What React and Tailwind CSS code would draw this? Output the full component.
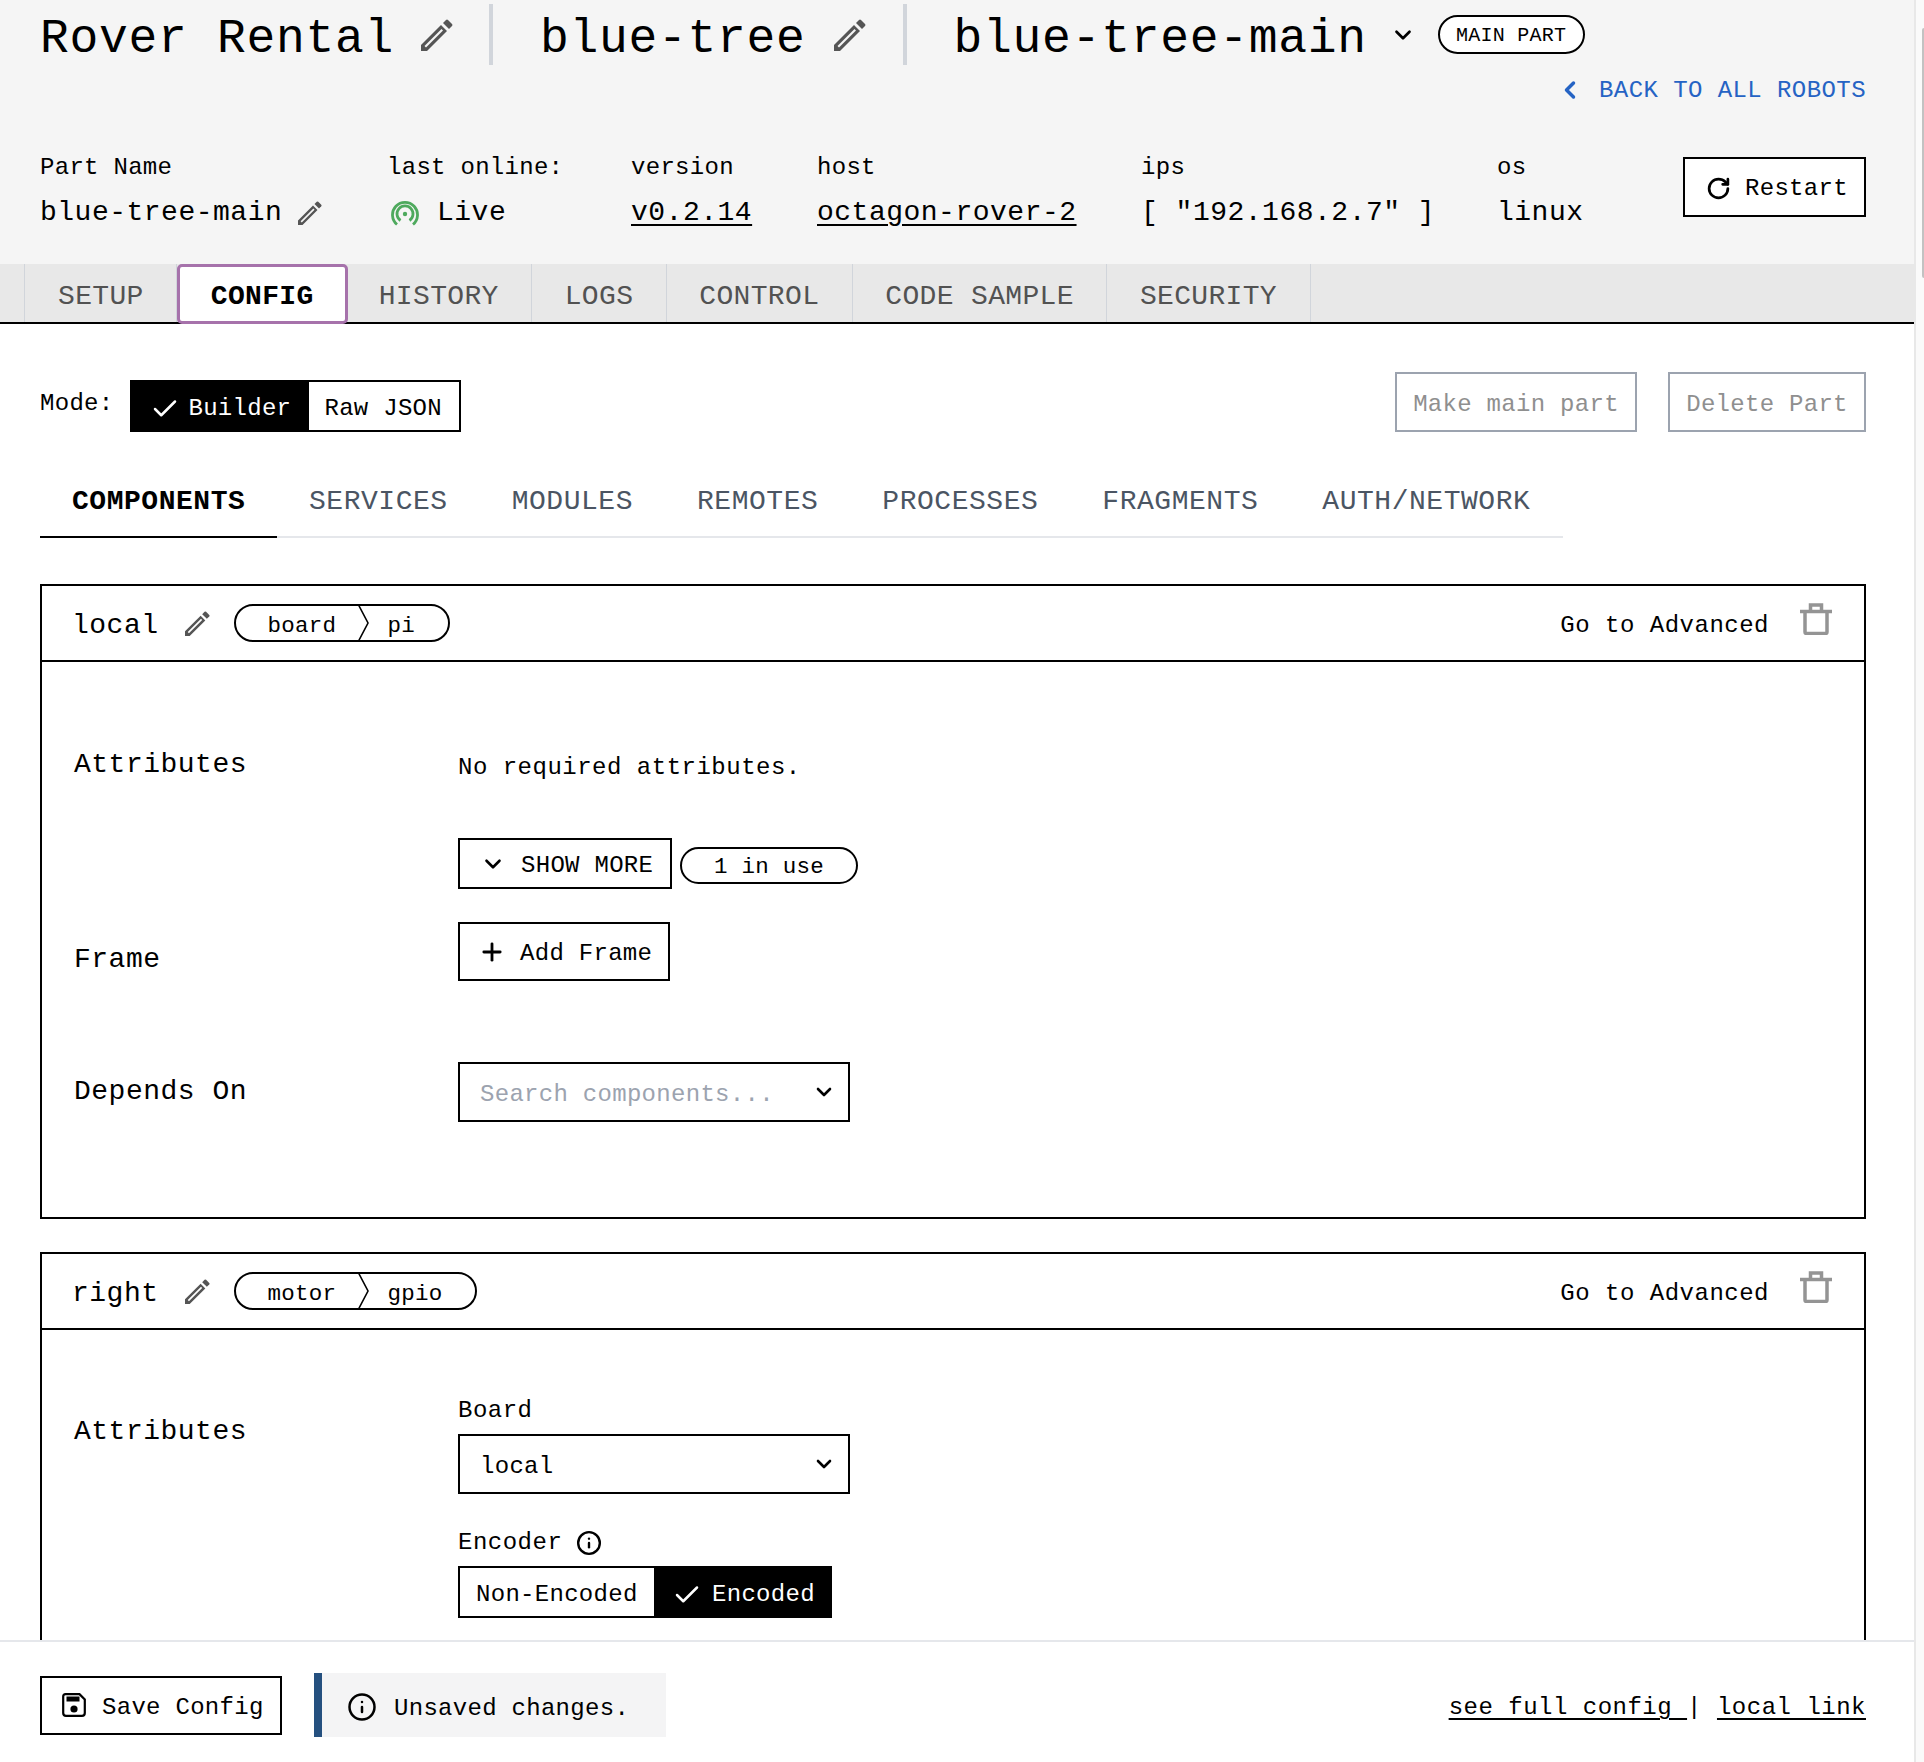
import { Check, ChevronDown, ChevronLeft, Info, Plus, RotateCw } from "lucide-react";

const T48 = "text-[48px] leading-[56px] tracking-[0.7px]";
const T28 = "text-[28px] leading-[34px] tracking-[0.5px]";
const T24 = "text-[24px] leading-[30px] tracking-[0.29px]";
const T24W = "text-[24px] leading-[34px] tracking-[0.5px]";
const T22 = "text-[22.5px] leading-[34px] tracking-[0.27px]";

/* ── Small drawn icons ── */
function Pencil({ size = 32 }) {
  return (
    <svg width={size} height={size} viewBox="0 0 32 32" fill="#555" className="shrink-0">
      <path fillRule="evenodd" d="M0 32V26L20 6L26 12L6 32ZM3.5 27L5 28.5L22 11.5L20.5 10Z" />
      <path d="M22 4L25 1Q26 0 27 1L31 5Q32 6 31 7L28 10Z" />
    </svg>
  );
}

function Trash() {
  return (
    <svg width="32" height="32" viewBox="0 0 32 32" fill="none" stroke="#949494" strokeWidth="3.5" className="shrink-0">
      <path d="M0 8.5H32" />
      <path d="M10.5 7V2H21.5V7" />
      <path d="M5 9V29Q5 30.5 6.5 30.5H25.5Q27 30.5 27 29V9" />
    </svg>
  );
}

function LiveIcon() {
  return (
    <svg width="28" height="26" viewBox="0 0 28 26" fill="none" stroke="#4ea95d" strokeWidth="2.8" className="ml-[4px] shrink-0">
      <path d="M6 24.5A12.5 12.5 0 1 1 22 24.5" />
      <path d="M9.5 20.5A8 8 0 1 1 18.5 20.5" />
      <circle cx="14" cy="14" r="2.2" fill="#4ea95d" stroke="none" />
    </svg>
  );
}

function SaveIcon() {
  return (
    <svg width="24" height="24" viewBox="0 0 24 24" fill="none" stroke="#000" strokeWidth="2.2" className="shrink-0">
      <path d="M3.5 1.2H17.5L22.8 6.5V20Q22.8 22.8 20 22.8H4Q1.2 22.8 1.2 20V3.5Q1.2 1.2 3.5 1.2Z" />
      <rect x="4.5" y="3.5" width="13" height="5" fill="#000" stroke="none" />
      <circle cx="12" cy="16" r="3.6" fill="#000" stroke="none" />
    </svg>
  );
}

/* ── Config header ── */
function Header() {
  const cols = [
    { label: "last online:", w: "w-[244px]", live: true },
    { label: "version", w: "w-[186px]", value: "v0.2.14", link: true },
    { label: "host", w: "w-[324px]", value: "octagon-rover-2", link: true },
    { label: "ips", w: "w-[356px]", value: '[ "192.168.2.7" ]' },
    { label: "os", w: "w-[186px]", value: "linux" },
  ];
  return (
    <div className="h-[264px] shrink-0 bg-[#f5f5f5] pl-10 pr-12">
      <div className="flex h-[69px] items-center">
        <span className={`mt-[8px] ${T48}`}>Rover Rental</span>
        <span className="ml-[27px]"><Pencil /></span>
        <div className="ml-[36px] h-[61px] w-1 bg-[#d1d5db]" />
        <span className={`ml-[47px] mt-[8px] ${T48}`}>blue-tree</span>
        <span className="ml-[28px]"><Pencil /></span>
        <div className="ml-[37px] h-[61px] w-1 bg-[#d1d5db]" />
        <span className={`ml-[47px] mt-[8px] ${T48}`}>blue-tree-main</span>
        <ChevronDown size={26} strokeWidth={2.5} className="ml-[23px]" />
        <span className="ml-[22px] flex h-[39px] w-[147px] items-center justify-center rounded-full border-2 border-black bg-white pt-[2px] text-[20px] tracking-[0.24px]">
          MAIN PART
        </span>
      </div>
      <div className={`mt-[4px] flex h-[34px] items-center justify-end text-[#2563c4] ${T24} !tracking-[0.43px]`}>
        <ChevronLeft size={28} strokeWidth={3} className="mr-[15px]" />
        <span className="pt-[2px]">BACK TO ALL ROBOTS</span>
      </div>
      <div className="mt-[51px] flex items-start">
        <div className="w-[347px]">
          <div className={`h-[20px] !leading-[20px] ${T24}`}>Part Name</div>
          <div className={`mt-[18px] flex items-center ${T28}`}>
            blue-tree-main
            <span className="ml-[16px]"><Pencil size={24} /></span>
          </div>
        </div>
        {cols.map((c) => (
          <div key={c.label} className={c.w}>
            <div className={`h-[20px] !leading-[20px] ${T24}`}>{c.label}</div>
            {c.live ? (
              <div className={`mt-[18px] flex items-center gap-[18px] ${T28}`}>
                <LiveIcon />
                Live
              </div>
            ) : (
              <div className={`mt-[18px] ${T28} ${c.link ? "underline underline-offset-4" : ""}`}>{c.value}</div>
            )}
          </div>
        ))}
        <button className={`-mt-[1px] flex h-[60px] w-[183px] items-center border-2 border-black bg-white pl-[21px] pt-[3px] ${T24}`}>
          <RotateCw size={25} strokeWidth={2.6} className="mr-[14px]" />
          Restart
        </button>
      </div>
    </div>
  );
}

function TopTabs() {
  const tab = "border-r border-[#d1d5db] pt-[7px] leading-[51px] text-[#525252]";
  return (
    <div className="flex h-[60px] shrink-0 border-b-2 border-black bg-[#e8e8e8] pl-[24px] text-[28px] tracking-[0.34px]">
      <div className={`border-l border-[#d1d5db] pl-[33px] pr-[32px] ${tab}`}>SETUP</div>
      <div className="z-10 -mb-[2px] h-[60px] w-[171px] rounded-[5px] border-[3px] border-[#a672ab] bg-white pt-[6px] text-center font-bold leading-[47px] text-black">
        CONFIG
      </div>
      <div className={`pl-[31px] pr-[32.5px] ${tab}`}>HISTORY</div>
      <div className={`px-[32.5px] ${tab}`}>LOGS</div>
      <div className={`px-[32.5px] ${tab}`}>CONTROL</div>
      <div className={`px-[32.5px] ${tab}`}>CODE SAMPLE</div>
      <div className={`px-[32.5px] ${tab}`}>SECURITY</div>
    </div>
  );
}

function ModeRow() {
  const ghost = `flex h-[60px] items-center justify-center border-2 border-[#9ca3af] pt-[5px] text-[#8f8f8f] ${T24}`;
  return (
    <div className="flex items-start justify-between pt-[48px]">
      <div className="flex items-start">
        <span className={`mt-[17px] ${T24}`}>Mode:</span>
        <div className={`ml-[17px] mt-[8px] flex h-[52px] border-2 border-black ${T24}`}>
          <div className="flex w-[177px] items-center bg-black pl-[18px] pt-[5px] text-white">
            <Check size={30} strokeWidth={2} className="mr-[8px]" />
            Builder
          </div>
          <div className="flex w-[150px] items-center pl-[15px] pt-[5px]">Raw JSON</div>
        </div>
      </div>
      <div className="flex gap-[31px]">
        <div className={`w-[242px] ${ghost}`}>Make main part</div>
        <div className={`w-[198px] ${ghost}`}>Delete Part</div>
      </div>
    </div>
  );
}

function SubTabs() {
  const tabs = ["SERVICES", "MODULES", "REMOTES", "PROCESSES", "FRAGMENTS", "AUTH/NETWORK"];
  return (
    <div className="mt-[32px] flex h-[74px] w-[1523px] border-b-2 border-[#e5e7eb] text-[28px] tracking-[0.53px]">
      <div className="-mb-[2px] h-[74px] w-[237px] border-b-2 border-black pl-[32px] pt-[4px] font-bold leading-[67px]">COMPONENTS</div>
      {tabs.map((t) => (
        <div key={t} className="px-[32px] pt-[4px] leading-[67px] text-[#4b5563]">{t}</div>
      ))}
    </div>
  );
}

/* ── Component card ── */
function CardHeader({ name, type, model }) {
  return (
    <div className="flex h-[76px] shrink-0 items-center border-b-2 border-black pl-[30px] pr-[32px]">
      <span className={`mt-[5px] ${T28}`}>{name}</span>
      <span className="ml-[26px]"><Pencil size={25} /></span>
      <div className={`ml-[24px] flex h-[38px] items-center rounded-full border-2 border-black pl-[32px] pr-[33px] ${T22}`}>
        <span className="mt-[5px]">{type}</span>
        <svg width="12" height="38" viewBox="0 0 12 38" fill="none" stroke="#000" strokeWidth="1.6" className="ml-[21px] mr-[18px] shrink-0">
          <path d="M1 0L11 19L1 38" />
        </svg>
        <span className="mt-[5px]">{model}</span>
      </div>
      <span className={`ml-auto mt-[5px] ${T24W}`}>Go to Advanced</span>
      <span className="ml-[31px] -mt-[8px]"><Trash /></span>
    </div>
  );
}

function Label({ className = "", children }) {
  return <div className={`w-[384px] shrink-0 ${T28} ${className}`}>{children}</div>;
}

function SelectBox({ text, muted }) {
  return (
    <div className={`flex h-[60px] w-[392px] items-center justify-between border-2 border-black pl-[20px] pr-[12px] ${T24}`}>
      <span className={`pt-[5px] ${muted ? "text-[#9ca3af]" : ""}`}>{text}</span>
      <ChevronDown size={24} strokeWidth={2.6} />
    </div>
  );
}

function LocalCard() {
  return (
    <div className="mt-[46px] flex h-[635px] flex-col border-2 border-black">
      <CardHeader name="local" type="board" model="pi" />
      <div className="pl-[32px]">
        <div className="mt-[84px] flex">
          <Label className="mt-[2px]">Attributes</Label>
          <div className="mt-[5px]">
            <div className={T24W}>No required attributes.</div>
            <div className="mt-[53px] flex items-center">
              <div className={`flex h-[51px] w-[214px] items-center border-2 border-black pl-[20px] ${T24}`}>
                <ChevronDown size={26} strokeWidth={2.4} className="mr-[15px]" />
                <span className="pt-[5px]">SHOW MORE</span>
              </div>
              <div className={`ml-[8px] mt-[4px] flex h-[37px] w-[178px] items-center justify-center rounded-full border-2 border-black pt-[2px] ${T22}`}>
                1 in use
              </div>
            </div>
          </div>
        </div>
        <div className="mt-[33px] flex">
          <Label className="mt-[21px]">Frame</Label>
          <div className={`flex h-[59px] w-[212px] items-center border-2 border-black pl-[18px] ${T24}`}>
            <Plus size={28} strokeWidth={2.4} className="mr-[14px]" />
            <span className="pt-[5px]">Add Frame</span>
          </div>
        </div>
        <div className="mt-[81px] flex">
          <Label className="mt-[13px]">Depends On</Label>
          <SelectBox text="Search components..." muted />
        </div>
      </div>
    </div>
  );
}

function RightCard() {
  return (
    <div className="mt-[33px] flex h-[700px] flex-col border-2 border-black">
      <CardHeader name="right" type="motor" model="gpio" />
      <div className="flex pl-[32px] pt-[64px]">
        <Label className="mt-[21px]">Attributes</Label>
        <div>
          <div className={T24W}>Board</div>
          <div className="mt-[6px]"><SelectBox text="local" /></div>
          <div className={`mt-[32px] flex items-center ${T24W}`}>
            Encoder
            <Info size={26} strokeWidth={2.2} className="ml-[14px]" />
          </div>
          <div className={`mt-[6px] flex h-[52px] w-[374px] border-2 border-black ${T24}`}>
            <div className="flex w-[194px] items-center pl-[16px] pt-[5px]">Non-Encoded</div>
            <div className="flex flex-1 items-center bg-black pl-[18px] pt-[5px] text-white">
              <Check size={30} strokeWidth={2} className="mr-[10px]" />
              Encoded
            </div>
          </div>
        </div>
      </div>
    </div>
  );
}

function Footer() {
  return (
    <div className="flex h-[122px] shrink-0 items-center border-t-2 border-[#e5e7eb] bg-white pl-10 pr-12 pt-[6px]">
      <div className={`flex h-[59px] w-[242px] items-center border-2 border-black pl-[20px] ${T24}`}>
        <SaveIcon />
        <span className="ml-[16px] pt-[6px]">Save Config</span>
      </div>
      <div className={`ml-[32px] flex h-[64px] w-[352px] items-center border-l-[8px] border-[#25507f] bg-[#f4f4f5] pl-[25px] ${T24}`}>
        <Info size={30} strokeWidth={2} className="mr-[17px] mt-[3px]" />
        <span className="pt-[7px]">Unsaved changes.</span>
      </div>
      <div className={`ml-auto flex pt-[6px] ${T24W}`}>
        <span className="whitespace-pre underline underline-offset-4">see full config </span>
        <span>|</span>
        <span className="ml-[15px] underline underline-offset-4">local link</span>
      </div>
    </div>
  );
}

export default function App() {
  return (
    <div className="flex h-[1762px] w-[1924px] overflow-hidden bg-white font-['Liberation_Mono',monospace] text-black">
      <div className="flex w-[1914px] shrink-0 flex-col">
        <Header />
        <TopTabs />
        <div className="min-h-0 flex-1 overflow-hidden pl-10 pr-12">
          <ModeRow />
          <SubTabs />
          <LocalCard />
          <RightCard />
        </div>
        <Footer />
      </div>
      {/* cut-off browser scrollbar */}
      <div className="flex flex-1 justify-end border-l-2 border-[#e8e8e8] bg-[#fafafa]">
        <div className="mt-[28px] h-[250px] w-[2px] rounded-l bg-[#c2c2c2]" />
      </div>
    </div>
  );
}
